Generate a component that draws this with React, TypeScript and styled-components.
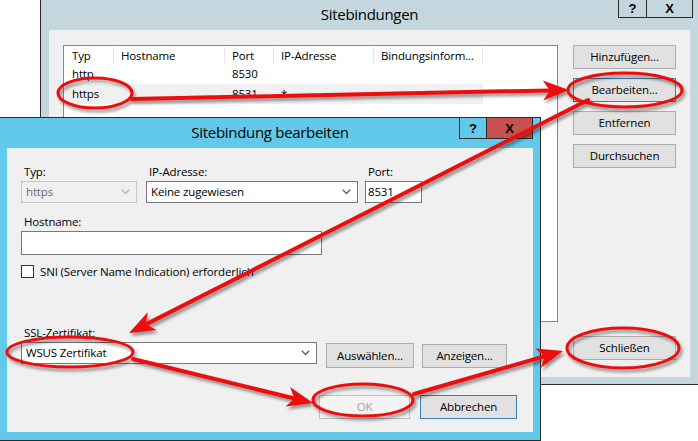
import React from "react";
import styled, { createGlobalStyle } from "styled-components";

const Global = createGlobalStyle`
  html, body { margin: 0; padding: 0; background: #ffffff; }
  body { font-family: "Segoe UI", "Open Sans", "Noto Sans", sans-serif; font-size: 11.5px; letter-spacing: -0.15px; color: #000; }
  * { box-sizing: border-box; }
`;

const Desktop = styled.div`
  position: relative;
  width: 698px;
  height: 441px;
  overflow: hidden;
  background: #ffffff;
`;

const Window = styled.div<{ $frame: string; $left: number; $top: number; $w: number; $h: number }>`
  position: absolute;
  left: ${(p) => p.$left}px;
  top: ${(p) => p.$top}px;
  width: ${(p) => p.$w}px;
  height: ${(p) => p.$h}px;
  border: 1px solid #2b2b2b;
  background: ${(p) => p.$frame};
  display: flex;
  flex-direction: column;
`;

const TitleBar = styled.div`
  height: 30px;
  flex: none;
  display: grid;
  grid-template-columns: 1fr auto 1fr;
  align-items: center;
`;

const Title = styled.div`
  grid-column: 2;
  font-size: 15px;
  letter-spacing: -0.3px;
  color: #000;
  white-space: nowrap;
  padding-bottom: 2px;
`;

const Controls = styled.div<{ $mr: number }>`
  grid-column: 3;
  justify-self: end;
  align-self: start;
  display: flex;
  margin-right: ${(p) => p.$mr}px;
`;

const CtrlBtn = styled.div<{ $w: number; $h: number; $bg: string; $first?: boolean }>`
  width: ${(p) => p.$w}px;
  height: ${(p) => p.$h}px;
  background: ${(p) => p.$bg};
  border: 1px solid #2b2b2b;
  border-top: none;
  ${(p) => (p.$first ? "" : "border-left: none;")}
  display: flex;
  align-items: center;
  justify-content: center;
  font-family: "Liberation Sans", Arial, sans-serif;
  font-weight: bold;
  font-size: 13px;
  letter-spacing: 0;
  color: #000;
`;

const BackClient = styled.div`
  flex: 1;
  margin: 0 8px 7px 8px;
  background: #f0f0f0;
  display: flex;
  gap: 15px;
  padding: 15px 14px 17px 14px;
`;

const ListBox = styled.div`
  width: 495px;
  height: 277px;
  border: 1px solid #828790;
  background: #ffffff;
  padding: 1px;
`;

const HeaderRow = styled.div`
  display: flex;
  height: 17px;
`;

const HeaderCell = styled.div<{ $w: number }>`
  width: ${(p) => p.$w}px;
  border-right: 1px solid #e5e5e5;
  padding-left: 7px;
  line-height: 17px;
  white-space: nowrap;
  overflow: hidden;
`;

const Row = styled.div<{ $sel?: boolean }>`
  display: flex;
  height: 20px;
  width: 418px;
  background: ${(p) => (p.$sel ? "#f0f0f0" : "transparent")};
`;

const Cell = styled.div<{ $w: number }>`
  width: ${(p) => p.$w}px;
  padding-left: 7px;
  line-height: 20px;
  white-space: nowrap;
`;

const SideButtons = styled.div`
  width: 103px;
  display: flex;
  flex-direction: column;
  gap: 9px;
`;

const Button = styled.div<{ $w?: number; $h?: number; $focus?: boolean; $disabled?: boolean }>`
  width: ${(p) => (p.$w ? `${p.$w}px` : "100%")};
  height: ${(p) => p.$h ?? 24}px;
  flex: none;
  background: ${(p) => (p.$disabled ? "#f4f4f4" : "#e1e1e1")};
  border: 1px solid ${(p) => (p.$focus ? "#3c7fb1" : p.$disabled ? "#bfbfbf" : "#adadad")};
  color: ${(p) => (p.$disabled ? "#a0a0a0" : "#000")};
  display: flex;
  align-items: center;
  justify-content: center;
  white-space: nowrap;
  padding-bottom: 1px;
`;

const PushDown = styled.div`
  margin-top: auto;
`;

const FrontClient = styled.div`
  flex: 1;
  margin: 0 7px 8px 7px;
  background: #f0f0f0;
  padding: 16px 16px 0 14px;
  display: flex;
  flex-direction: column;
`;

const FieldRow = styled.div<{ $gap?: number; $mt?: number }>`
  display: flex;
  align-items: flex-start;
  gap: ${(p) => p.$gap ?? 0}px;
  margin-top: ${(p) => p.$mt ?? 0}px;
`;

const Field = styled.div<{ $w: number; $ml?: number; $mt?: number }>`
  width: ${(p) => p.$w}px;
  margin-left: ${(p) => p.$ml ?? 0}px;
  margin-top: ${(p) => p.$mt ?? 0}px;
  display: flex;
  flex-direction: column;
`;

const Label = styled.div`
  height: 16px;
  line-height: 16px;
  padding-left: 3px;
  margin-bottom: 1px;
  white-space: nowrap;
`;

const Combo = styled.div<{ $disabled?: boolean; $h?: number }>`
  height: ${(p) => p.$h ?? 22}px;
  border: 1px solid ${(p) => (p.$disabled ? "#c6c6c6" : "#7a7a7a")};
  background: ${(p) => (p.$disabled ? "#f0f0f0" : "#ffffff")};
  color: ${(p) => (p.$disabled ? "#6d6d6d" : "#000")};
  display: flex;
  align-items: center;
  padding: 0 6px 0 4px;
  white-space: nowrap;
`;

const ComboText = styled.span`
  flex: 1;
  padding-bottom: 1px;
`;

const TextBox = styled.div<{ $w: number; $h: number }>`
  width: ${(p) => p.$w}px;
  height: ${(p) => p.$h}px;
  border: 1px solid #7a7a7a;
  background: #ffffff;
  display: flex;
  align-items: center;
  padding: 0 2px 1px 2px;
`;

const CheckRow = styled.div`
  display: flex;
  align-items: center;
  gap: 6px;
  margin-top: 9px;
`;

const CheckBox = styled.div`
  width: 13px;
  height: 13px;
  border: 1px solid #333333;
  background: #ffffff;
`;

const SslBlock = styled.div`
  margin-top: 46px;
  display: flex;
  flex-direction: column;
`;

const SslButton = styled(Button)<{ $mt: number; $ml?: number }>`
  margin-top: ${(p) => p.$mt}px;
  margin-left: ${(p) => p.$ml ?? 0}px;
`;

const DialogButtons = styled.div`
  display: flex;
  justify-content: flex-end;
  gap: 10px;
  margin-top: 27px;
`;

const Overlay = styled.svg`
  position: absolute;
  left: 0;
  top: 0;
  pointer-events: none;
`;

const Chevron: React.FC<{ color?: string }> = ({ color = "#606060" }) => (
  <svg width="9" height="6" viewBox="0 0 9 6">
    <path d="M0.8 0.8 L4.5 4.6 L8.2 0.8" fill="none" stroke={color} strokeWidth="1.4" />
  </svg>
);

type Pt = [number, number];

function arrow(from: Pt, to: Pt, len = 26, half = 10, notch = 7) {
  const [x1, y1] = from;
  const [x2, y2] = to;
  const dx = x2 - x1;
  const dy = y2 - y1;
  const L = Math.hypot(dx, dy);
  const ux = dx / L;
  const uy = dy / L;
  const px = -uy;
  const py = ux;
  const bx = x2 - ux * len;
  const by = y2 - uy * len;
  const nx = x2 - ux * (len - notch);
  const ny = y2 - uy * (len - notch);
  const head = [
    [x2, y2],
    [bx + px * half, by + py * half],
    [nx, ny],
    [bx - px * half, by - py * half],
  ]
    .map((p) => p.map((v) => v.toFixed(1)).join(","))
    .join(" ");
  return { line: { x1, y1, x2: nx, y2: ny }, head };
}

const RED = "#ee0a0a";

const Annotations: React.FC = () => {
  const arrows = [
    arrow([132, 99], [569, 90]),
    arrow([588, 100], [129, 333]),
    arrow([133, 359], [313, 403]),
    arrow([414, 394], [563, 351]),
  ];
  const ellipses = [
    { cx: 95, cy: 93, rx: 37, ry: 15 },
    { cx: 625, cy: 90, rx: 57, ry: 17 },
    { cx: 70, cy: 352, rx: 63, ry: 15 },
    { cx: 363, cy: 400, rx: 50, ry: 16 },
    { cx: 623, cy: 348, rx: 56, ry: 20 },
  ];
  return (
    <Overlay width={698} height={441} viewBox="0 0 698 441">
      <defs>
        <filter id="sh" x="-20%" y="-20%" width="140%" height="140%">
          <feDropShadow dx="2" dy="3" stdDeviation="1.8" floodColor="#000" floodOpacity="0.4" />
        </filter>
      </defs>
      <g filter="url(#sh)">
        {ellipses.map((e, i) => (
          <ellipse key={i} {...e} fill="none" stroke={RED} strokeWidth={3} />
        ))}
        {arrows.map((a, i) => (
          <g key={i}>
            <line {...a.line} stroke={RED} strokeWidth={4} strokeLinecap="round" />
            <polygon points={a.head} fill={RED} />
          </g>
        ))}
      </g>
    </Overlay>
  );
};

const cols = [49, 111, 49, 100, 109];

export default function App() {
  return (
    <>
      <Global />
      <Desktop>
        <Window $frame="#c4d7df" $left={40} $top={-1} $w={659} $h={386}>
          <TitleBar>
            <Title>Sitebindungen</Title>
            <Controls $mr={5}>
              <CtrlBtn $w={29} $h={18} $bg="#c4d7df" $first>?</CtrlBtn>
              <CtrlBtn $w={46} $h={18} $bg="#c4d7df">X</CtrlBtn>
            </Controls>
          </TitleBar>
          <BackClient>
            <ListBox>
              <HeaderRow>
                {["Typ", "Hostname", "Port", "IP-Adresse", "Bindungsinform..."].map((h, i) => (
                  <HeaderCell key={h} $w={cols[i]}>{h}</HeaderCell>
                ))}
              </HeaderRow>
              <Row>
                <Cell $w={cols[0]}>http</Cell>
                <Cell $w={cols[1]} />
                <Cell $w={cols[2]}>8530</Cell>
                <Cell $w={cols[3]} />
              </Row>
              <Row $sel>
                <Cell $w={cols[0]}>https</Cell>
                <Cell $w={cols[1]} />
                <Cell $w={cols[2]}>8531</Cell>
                <Cell $w={cols[3]}>*</Cell>
              </Row>
            </ListBox>
            <SideButtons>
              <Button>Hinzufügen...</Button>
              <Button $focus>Bearbeiten...</Button>
              <Button>Entfernen</Button>
              <Button>Durchsuchen</Button>
              <PushDown>
                <Button>Schließen</Button>
              </PushDown>
            </SideButtons>
          </BackClient>
        </Window>

        <Window $frame="#62c9ea" $left={-1} $top={117} $w={542} $h={324}>
          <TitleBar>
            <Title>Sitebindung bearbeiten</Title>
            <Controls $mr={7}>
              <CtrlBtn $w={28} $h={21} $bg="#62c9ea" $first>?</CtrlBtn>
              <CtrlBtn $w={46} $h={21} $bg="#c75050">X</CtrlBtn>
            </Controls>
          </TitleBar>
          <FrontClient>
            <FieldRow>
              <Field $w={116}>
                <Label>Typ:</Label>
                <Combo $disabled>
                  <ComboText>https</ComboText>
                  <Chevron color="#b5b5b5" />
                </Combo>
              </Field>
              <Field $w={212} $ml={9}>
                <Label>IP-Adresse:</Label>
                <Combo>
                  <ComboText>Keine zugewiesen</ComboText>
                  <Chevron />
                </Combo>
              </Field>
              <Field $w={57} $ml={7}>
                <Label>Port:</Label>
                <TextBox $w={57} $h={22}>8531</TextBox>
              </Field>
            </FieldRow>
            <Field $w={301} $mt={11}>
              <Label>Hostname:</Label>
              <TextBox $w={301} $h={24} />
            </Field>
            <CheckRow>
              <CheckBox />
              <span>SNI (Server Name Indication) erforderlich</span>
            </CheckRow>
            <SslBlock>
              <Label>SSL-Zertifikat:</Label>
              <FieldRow $gap={8}>
                <Field $w={296}>
                  <Combo>
                    <ComboText>WSUS Zertifikat</ComboText>
                    <Chevron />
                  </Combo>
                </Field>
                <SslButton $w={88} $h={25} $mt={1} $ml={1}>Auswählen...</SslButton>
                <SslButton $w={85} $h={24} $mt={2}>Anzeigen...</SslButton>
              </FieldRow>
            </SslBlock>
            <DialogButtons>
              <Button $w={91} $disabled>OK</Button>
              <Button $w={97} $focus>Abbrechen</Button>
            </DialogButtons>
          </FrontClient>
        </Window>

        <Annotations />
      </Desktop>
    </>
  );
}
